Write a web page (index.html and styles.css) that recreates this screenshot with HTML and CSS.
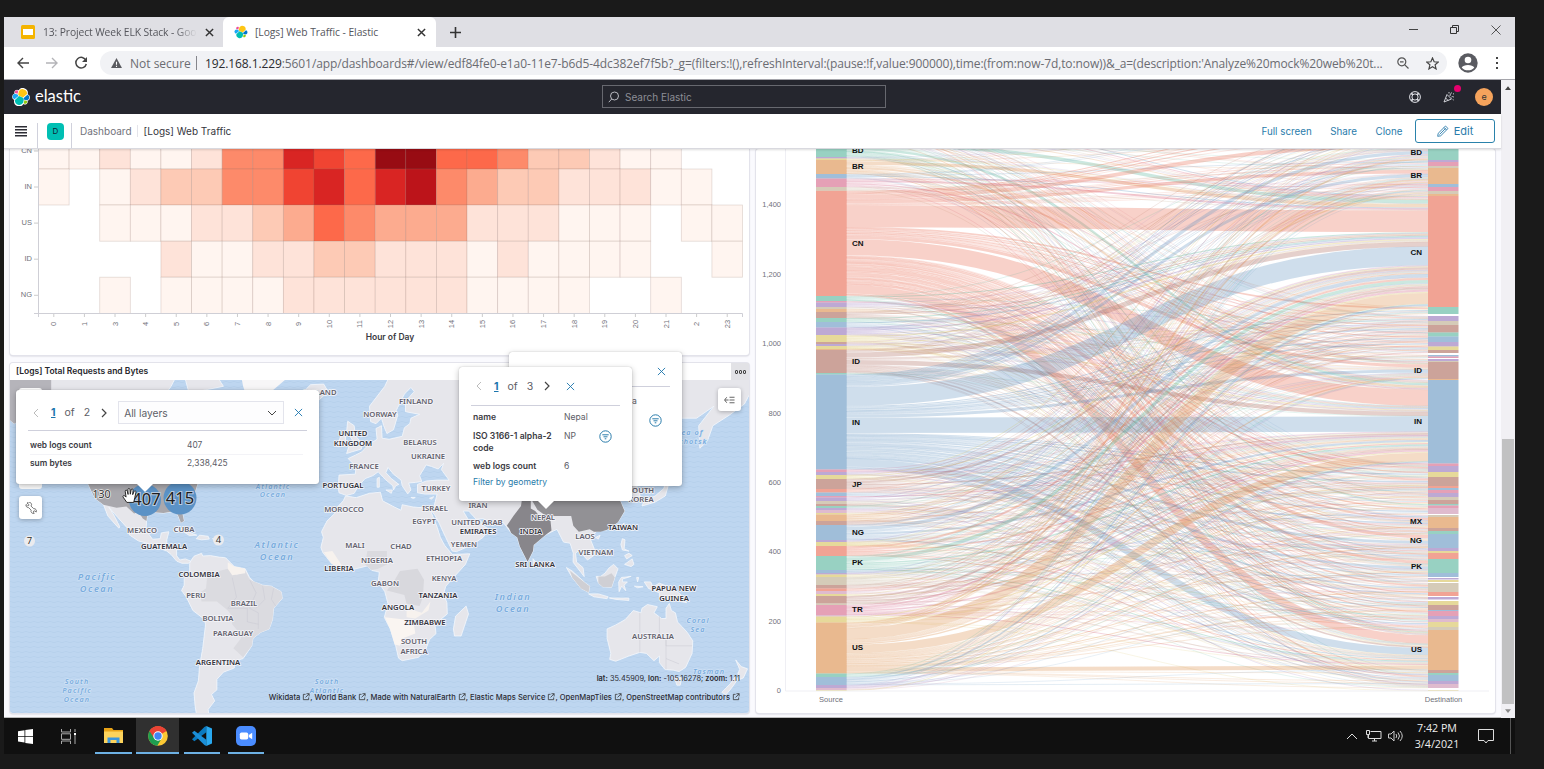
FILE: index.html
```html
<!DOCTYPE html>
<html lang="en">
<head>
<meta charset="utf-8">
<title>[Logs] Web Traffic - Elastic</title>
<link rel="stylesheet" href="styles.css">
</head>
<body>
<svg width="0" height="0" class="defs" aria-hidden="true">
  <symbol id="elastic" viewBox="0 0 32 32">
    <path fill="#fff" d="M32 16.8a6.3 6.3 0 0 0-4.1-5.9A8.9 8.9 0 0 0 11.8 4a4.8 4.8 0 0 0-7.3 5.6A6.4 6.4 0 0 0 4 21.5 8.9 8.9 0 0 0 20.200 28.400a4.800 4.800 0 0 0 7.300-5.700A6.300 6.300 0 0 0 32 16.800"/>
    <path fill="#fec514" d="m12.600 13.800 7 3.200 7.100-6.200A7.900 7.900 0 0 0 12.200 5.700l-1.200 6.100z"/>
    <path fill="#00bfb3" d="M5.300 21.200a7.900 7.900 0 0 0 14.500 5.200L21 20.300l-1.600-3-7-3.200z"/>
    <path fill="#f04e98" d="m5.200 9 4.800 1.200 1.100-5.500A3.800 3.800 0 0 0 5.200 9"/>
    <path fill="#1ba9f5" d="M4.800 10.200a5.300 5.300 0 0 0-.2 10L11.400 14l-1.300-2.600z"/>
    <path fill="#93c90e" d="M20.900 27.300a3.800 3.800 0 0 0 5.900-4.300l-4.800-1.100z"/>
    <path fill="#07c" d="m21.800 20.700 5.300 1.200a5.300 5.300 0 0 0 .3-10l-7 6.100z"/>
  </symbol>
  <symbol id="x" viewBox="0 0 10 10"><path d="M1 1l8 8M9 1l-8 8" fill="none" stroke="currentColor"/></symbol>
  <symbol id="filter" viewBox="0 0 13 13"><circle cx="6.500" cy="6.500" r="5.700" fill="none" stroke="currentColor"/><path d="M3.300 4.800h6.400M4.500 6.800h4M5.700 8.800h1.600" stroke="currentColor" fill="none"/></symbol>
  <symbol id="ext" viewBox="0 0 9 9"><path d="M4 1.500H1.500v6h6V5M5 .800h3v3M8 .800 4 5" fill="none" stroke="currentColor" stroke-width=".900"/></symbol>
</svg>
<div class="screen">
  <div class="tabs">
    <div class="tab">
      <svg class="fav" viewBox="0 0 14 14"><rect width="14" height="14" rx="1.500" fill="#f4b400"/><rect x="2" y="4" width="10" height="6" fill="#fff"/></svg>
      <span class="title t1">13: Project Week ELK Stack - Goo</span><svg class="close"><use href="#x"/></svg>
    </div>
    <div class="tab active">
      <svg class="fav"><use href="#elastic"/></svg>
      <span class="title t2">[Logs] Web Traffic - Elastic</span><svg class="close"><use href="#x"/></svg>
    </div>
    <svg class="plus" viewBox="0 0 11 11"><path d="M5.500 0v11M0 5.500h11" stroke="#333" stroke-width="1.600"/></svg>
    <div class="winbtns">
      <svg viewBox="0 0 10 10"><path d="M0 4.500h9" stroke="#444"/></svg>
      <svg viewBox="0 0 10 10"><path d="M.500 2.500h6v6h-6zM2.500 2.500v-2h6v6h-2" fill="none" stroke="#333"/></svg>
      <svg viewBox="0 0 10 10"><path d="M.500.500l9 9M9.500.500l-9 9" fill="none" stroke="#444" stroke-width=".900"/></svg>
    </div>
  </div>
  <div class="toolbar">
    <svg class="nav" viewBox="0 0 14 14"><path d="M13 7H2M7 2 2 7l5 5" fill="none" stroke="#444" stroke-width="1.400"/></svg>
    <svg class="nav" viewBox="0 0 14 14"><path d="M1 7h11M7 2l5 5-5 5" fill="none" stroke="#b4b4b8" stroke-width="1.400"/></svg>
    <svg class="nav" viewBox="0 0 14 14"><path d="M12 4.500A5.300 5.300 0 1 0 12.300 8" fill="none" stroke="#444" stroke-width="1.500"/><path d="M13 1v5H8z" fill="#444"/></svg>
    <div class="omni">
      <svg class="warn" viewBox="0 0 12 11"><path d="M6 0l6 11H0z" fill="#5a5b60"/><path d="M6 4v3.500M6 8.500v1.300" stroke="#fff" stroke-width="1.200"/></svg>
      <span class="ns">Not secure</span><i></i>
      <span class="url"><b>192.168.1.229</b>:5601/app/dashboards#/view/edf84fe0-e1a0-11e7-b6d5-4dc382ef7f5b?_g=(filters:!(),refreshInterval:(pause:!f,value:900000),time:(from:now-7d,to:now))&amp;_a=(description:'Analyze%20mock%20web%20t...</span>
      <svg class="mag" viewBox="0 0 12 12"><circle cx="4.800" cy="4.800" r="4" fill="none" stroke="#555" stroke-width="1.200"/><path d="M7.800 7.800l3.700 3.700M3 4.800h3.600" stroke="#555" stroke-width="1.200"/></svg>
      <svg class="star" viewBox="0 0 12 12"><path d="M6 .900l1.500 3.500 3.800.300-2.900 2.500.900 3.800L6 9l-3.300 2 .900-3.800L.700 4.700l3.800-.300z" fill="none" stroke="#444" stroke-width="1.100"/></svg>
    </div>
    <svg class="user" viewBox="0 0 20 20"><circle cx="10" cy="10" r="9.700" fill="#5a5b61"/><circle cx="10" cy="7" r="3.300" fill="#fff"/><path d="M3.700 14.500c1.500-3.500 11-3.500 12.600 0-3 3.800-9.600 3.800-12.600 0" fill="#fff"/></svg>
    <svg class="dots" viewBox="0 0 4 14"><path d="M1 1h2v2H1zM1 6h2v2H1zM1 11h2v2H1z" fill="#444"/></svg>
  </div>
  <div class="viewport">
    <div class="page">
      <header class="top">
        <svg class="logo"><use href="#elastic"/></svg><span class="brand">elastic</span>
        <div class="search"><svg viewBox="0 0 12 12"><circle cx="6.500" cy="5" r="4" fill="none" stroke="#b8b9c0"/><path d="M3.700 8 .800 11.200" stroke="#b8b9c0"/></svg><span>Search Elastic</span></div>
        <div class="acts">
          <svg class="help" viewBox="0 0 12 12"><circle cx="6" cy="6" r="5.400" fill="none" stroke="#dfe0e6"/><circle cx="6" cy="6" r="3.100" fill="none" stroke="#dfe0e6"/><path d="M2.200 2.200l1.700 1.700M9.800 2.200 8.100 3.900M2.200 9.800l1.700-1.700M9.800 9.800 8.100 8.100" stroke="#dfe0e6" stroke-width="1.800"/></svg>
          <span class="party"><svg viewBox="0 0 12 12"><path d="M1 11 4 3.500 8.500 8zM2.700 7l2.500 2.600M6 2.500V1M7 5c0-2 1-2 1.500-3.500M8.500 6C10 5 10 6 11 6M10 3.200l1-.700M9.700 8.500l1 .500" fill="none" stroke="#dfe0e6" stroke-width=".900"/></svg><em></em></span>
          <span class="avatar">e</span>
        </div>
      </header>
      <nav class="crumbs">
        <svg class="burger" viewBox="0 0 12 11"><path d="M0 .750h12M0 3.750h12M0 6.750h12M0 9.750h12" stroke="#2c2c34" stroke-width="1.500"/></svg>
        <i></i><span class="space">D</span><i></i>
        <span class="c1">Dashboard</span><u></u><span class="c2">[Logs] Web Traffic</span>
        <div class="links"><a>Full screen</a><a>Share</a><a>Clone</a>
          <button><svg viewBox="0 0 12 12"><path d="M1.200 8.300 8.500 1l2.500 2.500L3.700 10.800.700 11.300zM7 2.500 9.500 5M2.500 9.500 8.700 3.300" fill="none" stroke="#2a7cab" stroke-width=".900"/></svg>Edit</button></div>
      </nav>
      <main>
        <div class="col">
          <section class="panel heat"><svg id="heat" viewBox="10 149 739 206"></svg></section>
          <section class="panel mapp">
            <h2>[Logs] Total Requests and Bytes</h2><span class="opts"><b></b><b></b><b></b></span>
            <svg id="map" viewBox="10 380 739 333"></svg>
            <div class="tool wrench"><svg viewBox="0 0 14 14"><path d="M2.300 1.300A2.900 2.900 0 0 1 7 4.800l3.200 3a2.700 2.700 0 0 1 2.800 4l-1.500-1.500-1.400.300-.300 1.400 1 1.200a2.800 2.800 0 0 1-3.600-3.700L4.300 6.600A2.900 2.900 0 0 1 1.200 2.900l1.700 1.600 1.400-.400.200-1.300z" fill="none" stroke="#555" stroke-width=".900"/></svg></div>
            <div class="tool layers"><svg viewBox="0 0 12 10"><path d="M3 2 .600 5 3 8M1 5h4M6 2h5.500M6 5h5.500M6 8h5.500" fill="none" stroke="#444" stroke-width=".900"/></svg></div>
            <div class="pop back"><svg class="px"><use href="#x"/></svg><hr><span class="frag">a</span><svg class="filt"><use href="#filter"/></svg></div>
            <div class="pop front">
              <div class="pager"><svg viewBox="0 0 6 10"><path d="M5 1 1 5l4 4" fill="none" stroke="#bbb"/></svg><b>1</b><span>of</span><span>3</span><svg viewBox="0 0 6 10"><path d="M1 1l4 4-4 4" fill="none" stroke="#444" stroke-width="1.200"/></svg><svg class="px"><use href="#x"/></svg></div>
              <div class="rows">
                <div><b>name</b><span>Nepal</span></div>
                <div class="two"><b>ISO 3166-1 alpha-2 code</b><span>NP</span><svg class="filt"><use href="#filter"/></svg></div>
                <div class="cnt"><b>web logs count</b><span>6</span></div>
                <a>Filter by geometry</a>
              </div>
            </div>
            <div class="pop left">
              <div class="pager"><svg viewBox="0 0 6 10"><path d="M5 1 1 5l4 4" fill="none" stroke="#bbb"/></svg><b>1</b><span>of</span><span>2</span><svg viewBox="0 0 6 10"><path d="M1 1l4 4-4 4" fill="none" stroke="#444" stroke-width="1.200"/></svg>
                <div class="sel">All layers<svg viewBox="0 0 10 6"><path d="M1 1l4 4 4-4" fill="none" stroke="#444"/></svg></div><svg class="px"><use href="#x"/></svg></div>
              <div class="rows"><div><b>web logs count</b><span>407</span></div><div><b>sum bytes</b><span>2,338,425</span></div></div>
            </div>
            <svg class="hand" viewBox="0 0 15 16"><path d="M4.500 14.500 1 9.500c-.600-1.200.800-2 1.800-1l1 1L3 4c0-1.400 1.600-1.400 2 0l.700 3-.200-4.500c0-1.500 1.900-1.500 2 0l.300 4.300.700-4c.300-1.400 2-1.200 1.900.200L10 7.200l1.300-2.900c.600-1.200 2-.700 1.800.600L12 10l-1 4.500z" fill="#fff" stroke="#222" stroke-width=".900"/></svg>
            <div class="coords"><b>lat:</b> 35.45909, <b>lon:</b> -105.16278; <b>zoom:</b> 1.11</div>
            <div class="credit">Wikidata <svg><use href="#ext"/></svg>, World Bank <svg><use href="#ext"/></svg>, Made with NaturalEarth <svg><use href="#ext"/></svg>, Elastic Maps Service <svg><use href="#ext"/></svg>, OpenMapTiles <svg><use href="#ext"/></svg>, OpenStreetMap contributors <svg><use href="#ext"/></svg></div>
          </section>
        </div>
        <section class="panel sank"><svg id="sankey" viewBox="756 149 739 564"></svg></section>
      </main>
    </div>
    <div class="scroll"><svg viewBox="0 0 8 5"><path d="M0 5 4 0l4 5z" fill="#444"/></svg><div></div><svg viewBox="0 0 8 5"><path d="M0 0l4 5 4-5z" fill="#888"/></svg></div>
  </div>
  <footer class="task">
    <div class="ti a1"><svg viewBox="0 0 15 15"><path d="M0 2.200l6.500-1V7H0zM7.300 1 15 0v7H7.300zM0 7.800h6.500v5.800l-6.500-1zM7.300 7.800H15V15l-7.700-1.100z" fill="#fff"/></svg></div>
    <div class="ti a2"><svg viewBox="0 0 15 15"><path d="M.500 0v3h9V0M.500 15v-3h9v3M.500 4.800h9v5.500h-9zM14 0v3M14 5v10" fill="none" stroke="#aaa"/><path d="M13 4h2v2h-2z" fill="#fff"/></svg></div>
    <div class="ti a3 run"><svg viewBox="0 0 20 16" class="wide"><path d="M0 0h8l1.500 2H19v13H0z" fill="#e8a317"/><path d="M0 3.500h19V15H0z" fill="#fcd35c"/><path d="M3.500 15V9.500h12V15h-3v-3h-6v3z" fill="#3a96dd"/></svg></div>
    <div class="ti a4 run on"><svg viewBox="0 0 20 20" class="wide big"><circle cx="10" cy="10" r="9.800" fill="#fcc934"/><path d="M1.500 5.100A9.800 9.800 0 0 1 18.500 5.100L10 10z" fill="#ea4335"/><path d="M1.500 5.100A9.800 9.800 0 0 0 9.300 19.800L13.900 12 10 10z" fill="#1e9e50"/><path d="M1.500 5.100A9.800 9.800 0 0 1 18.500 5.100H10L6 12z" fill="#ea4335"/><circle cx="10" cy="10" r="4.700" fill="#fff"/><circle cx="10" cy="10" r="3.700" fill="#4285f4"/></svg></div>
    <div class="ti a5 run"><svg viewBox="0 0 21 21" class="wide big"><path d="M15 0v6.500L2.500 16 0 14 13 1z" fill="#0a7ac0"/><path d="M15 21v-6.500L2.500 5 0 7l13 13z" fill="#1b8fd8"/><path d="M15 0l6 2.500v16L15 21z" fill="#29a9f0"/></svg></div>
    <div class="ti a6 run"><svg viewBox="0 0 20 20" class="wide big"><rect width="20" height="20" rx="5" fill="#4a8cff"/><rect x="3.800" y="6.500" width="8.400" height="7" rx="1.700" fill="#fff"/><path d="M12.800 9l3.400-2.300v6.600L12.800 11z" fill="#fff"/></svg></div>
    <div class="tray">
      <svg viewBox="0 0 12 8"><path d="M1 7l5-5 5 5" fill="none" stroke="#ddd"/></svg>
      <svg class="net" viewBox="0 0 16 12"><path d="M4.500 1.500H15v7H2.500V5M6 11h5M8.500 8.500V11M.500.500h3v4h-3zM2 4.500V8" fill="none" stroke="#ddd"/></svg>
      <svg class="vol" viewBox="0 0 15 12"><path d="M.500 4H3l3-3v10L3 8H.500zM8 4q1.500 2 0 4M10 2.500q3 3.500 0 7M12 1q4.500 5 0 10" fill="none" stroke="#ccc"/></svg>
      <div class="clock">7:42 PM<br>3/4/2021</div>
      <svg class="note" viewBox="0 0 16 15"><path d="M.500.500h15v11H10L8 14l-2-2.500H.500z" fill="none" stroke="#ddd"/></svg>
    </div>
  </footer>
</div>
<script src="charts.js"></script>
</body>
</html>
```

FILE: styles.css
```css
*{box-sizing:border-box}
body{margin:0;width:1544px;height:769px;overflow:hidden;background:#1a1a1a;font-family:Inter,"Liberation Sans",sans-serif;color:#45454d}
.defs{position:absolute}
svg{display:block;flex:none}
.screen{margin:17px 0 0 4px;width:1511px;height:737px;display:flex;flex-direction:column;background:#fff}
.tabs{height:30px;background:#dfdfe4;display:flex;align-items:center;font-family:"Open Sans","Noto Sans",sans-serif;font-size:10.300px;color:#55565c}
.tab{height:30px;width:219px;display:flex;align-items:center;padding-left:17px}
.tab.active{background:#fff;border-radius:6px 6px 0 0;width:213px;padding-left:11px}
.fav{width:14px;height:14px;margin-right:8px}
.active .fav{margin-right:7px}
.title{white-space:nowrap;overflow:hidden}
.t1{width:154px;letter-spacing:-.1px;-webkit-mask-image:linear-gradient(90deg,#000 86%,transparent)}
.t2{width:153px;letter-spacing:-.050px}
.close{width:9px;height:9px;margin-left:8px;color:#333;stroke-width:1.600}
.active .close{margin-left:9px}
.plus{width:11px;height:11px;margin-left:14px}
.winbtns{margin-left:auto;display:flex;gap:31px;padding-right:14px}
.winbtns svg{width:10px;height:10px;position:relative;top:-2px}
.toolbar{height:32px;display:flex;align-items:center;font-family:"Open Sans","Noto Sans",sans-serif;font-size:12px;padding-left:12px}
.nav{width:14px;height:14px;margin-right:15px}
.nav:nth-child(3){margin-right:12px}
.omni{width:1347px;height:24px;border-radius:12px;background:#f1f2f5;display:flex;align-items:center;padding-left:11px;color:#6b6c72;flex:none}
.warn{width:11px;height:10px;margin-right:8px}
.ns{width:60px;white-space:nowrap}
.omni i{width:1px;height:14px;background:#85868c;margin:0 8px 0 6px}
.url{white-space:nowrap;width:1192px;letter-spacing:-.100px}
.url b{font-weight:400;color:#2a2a2e}
.mag{width:12px;height:12px;margin-right:17px}
.star{width:13px;height:13px}
.user{width:20px;height:20px;margin-left:11px}
.dots{width:4px;height:14px;margin-left:17px}
.viewport{height:639px;display:flex;border-top:1px solid #a5a5ab}
.page{width:1497px;display:flex;flex-direction:column}
.top{height:34px;background:#25262e;display:flex;align-items:center;padding-left:8px;position:relative}
.logo{width:18px;height:18px}
.brand{font:16.500px/20px Lato,sans-serif;color:#fff;margin:-2px 0 0 5px}
.search{position:absolute;left:598px;top:5px;width:284px;height:23px;border:1px solid #67686f;display:flex;align-items:center;padding-left:5px;font-size:10px;color:#8d8e96;gap:5px}
.search svg{width:12px;height:12px}
.acts{margin-left:auto;display:flex;align-items:center;padding-right:8px}
.help{width:12px;height:12px;margin-right:22px}
.party{position:relative;margin-right:20px}
.party svg{width:12px;height:12px}
.party em{position:absolute;width:7px;height:7px;border-radius:50%;background:#e5006e;right:-6px;top:-6px}
.avatar{width:18px;height:18px;border-radius:50%;background:#f5a35c;color:#333;font-size:9px;text-align:center;line-height:17px}
.crumbs{height:35px;display:flex;align-items:center;padding-left:11px;font-size:10px;border-bottom:1px solid #d9d9df;background:#fff;box-shadow:0 1px 2px #0002;z-index:2}
.burger{width:12px;height:11px}
.crumbs i{width:1px;height:25px;background:#d0d1dc;margin:9px 9px 0 10px}
.space{width:17px;height:17px;border-radius:4px;background:#00bfb3;font-size:8px;text-align:center;line-height:17px;color:#123}
.space + i{margin:9px 8px 0 7px}
.c1{color:#71727a}
.crumbs u{width:1px;height:12px;background:#e4e4ea;margin:0 6px 0 5px}
.c2{color:#35353d}
.links{margin-left:auto;display:flex;align-items:center;gap:18.500px;color:#2a7cab;padding-right:6px}
.links a{font-size:9.800px}
.links button{width:80px;height:24px;margin-left:-6px;border:1px solid #2a82ab;border-radius:3px;background:#fff;color:#2a7cab;font:11px Inter,sans-serif;display:flex;align-items:center;justify-content:center;gap:5px;padding:0}
.links button svg{width:12px;height:12px}
main{height:569px;background:#fafafe;display:flex;gap:7px;padding:0 6px 5px;border-bottom:1px solid #bbb}
.col{width:739px;display:flex;flex-direction:column;gap:8px}
.panel{background:#fff;border-radius:3px;box-shadow:0 0 0 1px #e3e3eb,0 1px 2px #b9b9c4}
.heat{height:206px;border-radius:0 0 3px 3px}
.heat svg,.sank svg{width:739px;height:100%}
.sank{width:739px;height:564px}
.mapp{height:350px;position:relative}
.mapp h2{margin:0;height:17px;line-height:17px;font-size:8.500px;font-weight:600;color:#26262c;padding-left:6px}
#map{width:739px;height:333px;border-radius:0 0 3px 3px}
.opts{position:absolute;right:0;top:0;width:18px;height:17px;background:#e2e2e6;display:flex;gap:1px;align-items:center;justify-content:center}
.opts b{width:3px;height:4px;border:1px solid #444;border-radius:1px}
.tool{position:absolute;width:23px;height:23px;border-radius:3px;background:#fff;box-shadow:0 1px 4px #0004;display:grid;place-items:center}
.tool svg{width:12px;height:12px}
.tool.layers svg{width:11px}
.wrench{left:9px;top:133px}
.layers{left:708px;top:25px}
.pop{position:absolute;background:#fff;border-radius:3px;box-shadow:0 2px 6px #0004,0 0 1px #0005;font-size:8.600px;color:#5c5d66}
.pop.back{left:499px;top:-11px;width:173px;height:134px}
.back .px{position:absolute;left:148px;top:15px}
.back hr{position:absolute;left:11px;right:12px;top:34px;border:0;border-top:1px solid #cfd0dc;margin:0}
.frag{position:absolute;left:123px;top:44px}
.back .filt{position:absolute;left:140px;top:62px}
.px{width:9px;height:9px;color:#1b75ad}
.filt{width:13px;height:13px;color:#2a7cab}
.pop.front{left:449px;top:4px;width:173px;height:134px;padding:0 12px}
.front:after,.left:after{content:"";position:absolute;left:79px;bottom:-8px;border:8px solid transparent;border-top-color:#fff;border-bottom:0}
.pager{display:flex;align-items:center;font-size:10.500px;height:39px;border-bottom:1px solid #cfd0dc;padding-left:5px}
.pager > svg{width:6px;height:10px}
.pager b{color:#1b75ad;text-decoration:underline;margin:0 9px 0 12px}
.pager span{margin-right:9px}
.pager span + span{margin-right:11px}
.pager > .px{width:9px;height:9px;margin-left:16px}
.rows{padding:0 4px 0 3px;color:#5c5d66}
.rows b{font-weight:600;color:#3a3a42;display:inline-block}
.front .rows > div{display:flex;height:19px;align-items:center}
.front .rows b{width:91px;margin-right:0;white-space:normal}
.front .rows{padding:1px 2px}
.front .rows > div.two{height:31px;align-items:flex-start;line-height:12px;padding-top:4px}
.two b{padding-right:8px}
.two span{width:35px}
.front .rows > .cnt{height:17px}
.rows a{display:block;color:#2a7cab;line-height:17px}
.pop.left{left:6px;top:27px;width:303px;height:94px;padding:0 12px}
.left:after{left:121px}
.left .pager{height:41px;padding-top:5px}
.sel{width:166px;height:23px;border:1px solid #e3e4ec;background:#fdfdfe;display:flex;align-items:center;justify-content:space-between;padding:0 6px 0 5px;margin-left:11px;font-size:10.200px}
.sel svg{width:10px;height:6px}
.left .pager > .px{margin-left:10px}
.left .rows{padding:5px 4px 0 2px;font-size:8.400px}
.left .rows > div{height:18px;display:flex;align-items:center}
.left .rows > div + div{border-top:1px solid #f3f3f7;height:17px}
.left .rows b{width:157px}
.hand{position:absolute;left:112px;top:124px;width:16px;height:17px}
.coords,.credit{position:absolute;color:#2c2c34;white-space:nowrap}
.coords{right:9px;top:311px;font-size:7.400px}
.coords b{font-weight:600}
.credit{right:9px;top:330px;font-size:7.600px;font-weight:500}
.credit svg{width:8px;height:8px;display:inline-block;vertical-align:-1px;color:#333}
.scroll{width:14px;background:#f1f0f4;display:flex;flex-direction:column;align-items:center;padding:6px 0 5px}
.scroll svg{width:6px;height:4px}
.scroll div{width:12px;height:265px;background:#c1c1c2;margin:349px 0 5px}
.task{height:36px;background:#101010;display:flex;position:relative;color:#eee}
.ti{height:36px;display:grid;place-items:center;position:relative}
.ti svg{width:15px;height:15px}
.ti svg.wide{width:20px;height:16px}
.ti svg.big{width:20px;height:20px}
.a1{width:42px}
.a2{width:45px}
.a3{width:45px}
.a4{width:43px;margin-right:1px}
.a5{width:44px}
.a6{width:44px}
.run:after{content:"";position:absolute;left:4px;right:4px;bottom:0;height:2px;background:#6db1e4}
.on{background:#303030}
.on:after{left:0;right:0}
.tray{margin-left:auto;display:flex;align-items:center;padding-right:21px}
.tray svg{width:12px;height:8px;margin-right:8px}
.tray .net{width:16px;height:12px;margin-right:6px}
.tray .vol{width:15px;height:12px;margin-right:10px}
.tray .note{width:16px;height:15px;margin:0}
.clock{width:48px;text-align:center;font:10.700px/16px "Open Sans",sans-serif;margin-right:17px}
.task:after{content:"";position:absolute;right:4px;top:0;width:1px;height:36px;background:#555}
.ax{font-size:7.500px;fill:#71727a;font-family:"Liberation Sans",sans-serif}
.axt{font-size:8.500px;font-weight:600;fill:#3a3a42}
.nd{font:700 8px "Liberation Sans",sans-serif;fill:#111}
.ml{font:600 7.700px "Noto Sans",sans-serif;fill:#62616c;stroke:#f6f6fa;stroke-width:1.600px;paint-order:stroke;text-anchor:middle;stroke-linejoin:round}
.ml.dk{fill:#33333c}
.ol{font:italic 600 9.200px "Noto Sans",sans-serif;fill:#78abdd;stroke:#d4e5f7;stroke-width:1.200px;paint-order:stroke;text-anchor:middle;letter-spacing:1.500px}
.ol.sm{font-size:7.200px;letter-spacing:1.100px}
.cl{font:16.500px "Noto Sans",sans-serif;fill:#1d1d20;stroke:#b9cbe0;stroke-width:2px;paint-order:stroke;text-anchor:middle}
.cs{font:9.500px "Noto Sans",sans-serif;fill:#333;stroke:#eee;stroke-width:1.500px;paint-order:stroke;text-anchor:middle}
```

FILE: charts.js
```js
const NS = 'http://www.w3.org/2000/svg';
function add(parent, tag, attrs, text) {
  const e = document.createElementNS(NS, tag);
  for (const k in attrs) e.setAttribute(k, attrs[k]);
  if (text !== undefined) e.textContent = text;
  parent.appendChild(e);
  return e;
}
let seed = 11;
function rnd() { seed = (seed * 16807) % 2147483647; return seed / 2147483647; }

/* ---- Heatmap: unique visitors by country and hour ---- */
(function () {
  const g = document.getElementById('heat');
  const col = ['', '#fff5f0', '#fee3d9', '#fdcab5', '#fcab8f', '#fd8a6a', '#fd694a', '#f04432', '#d92523', '#bc141a', '#980c13'];
  const rows = [
    ['CN', 133, 36, [1,1,2,1,1,2,5,5,8,7,6,10,10,6,6,5,3,3,2,1,1,0,0]],
    ['IN', 169, 36, [1,0,1,2,3,3,5,5,7,8,6,8,9,5,4,3,3,2,2,2,1,1,0]],
    ['US', 205, 36.2, [0,0,1,1,1,2,2,3,4,6,5,4,4,4,2,2,2,1,1,1,0,1,1]],
    ['ID', 241.2, 36, [0,0,0,0,2,1,1,2,2,3,3,2,2,2,1,2,1,1,1,1,0,0,1]],
    ['NG', 277.2, 36.2, [0,0,1,0,1,1,1,1,2,2,2,2,2,2,1,1,1,1,0,0,1,0,0]]
  ];
  const x0 = 38.5, w = 30.61;
  rows.forEach(r => {
    r[3].forEach((v, i) => {
      if (v) add(g, 'rect', { x: x0 + i * w, y: r[1], width: w, height: r[2], fill: col[v], stroke: '#8c6a62', 'stroke-opacity': .24, 'stroke-width': .8 });
    });
    const cy = r[1] + r[2] / 2;
    add(g, 'text', { x: 32, y: cy + 2.1, class: 'ax', 'text-anchor': 'end' }, r[0]);
    add(g, 'path', { d: `M34 ${cy}h4`, stroke: '#ccc' });
  });
  add(g, 'path', { d: 'M38.5 149V317M34 313.5H742.5V317', fill: 'none', stroke: '#cfcfd6' });
  ['0','1','3','4','5','6','7','8','9','10','11','12','13','14','15','16','17','18','19','20','21','2','23'].forEach((t, i) => {
    const x = x0 + (i + .5) * w;
    add(g, 'path', { d: `M${x} 314v3`, stroke: '#ccc' });
    add(g, 'text', { transform: `translate(${x + 2.5} 324) rotate(-90)`, class: 'ax', 'text-anchor': 'middle' }, t);
  });
  add(g, 'text', { x: 390, y: 340, class: 'axt', 'text-anchor': 'middle' }, 'Hour of Day');
})();

/* ---- Sankey: source and destination countries ---- */
(function () {
  const g = document.getElementById('sankey');
  const C = { t: '#54B399', b: '#6092C0', p: '#D36086', v: '#9170B8', l: '#CA8EAE', y: '#D6BF57', n: '#B9A888', o: '#DA8B45', w: '#AA6556', r: '#E7664C' };
  const parse = (s, y) => s.split(' ').map(k => {
    const end = parseFloat(k.slice(1)), o = { c: k[0], y0: y, y1: end };
    y = end;
    return o;
  });
  const L = parse('b124 p127 r131 n134 v137 o141 t157 v158.5 y160 o174 b178.5 p187 n190.8 r296 t301 p302.5 v307 n309 o312 w318 t322 b327.5 v335 y342 w344 v346 y349 o350 w373 t374.5 b469.5 p472 v475 y479 w489 r492.5 b496 p497.5 v501 n504 w506 t508 v510 l513 y514.5 o521 w525 b540 v542 y546 r556 t570 b573 v574.5 y577 n585 w588.5 r591 l594 y596 w603.5 n605 p615 l616.5 y622.5 o673.5 t677 b685 v688 l690 y691', 120);
  const R = parse('b125 p128 r133 n136 v138 o142 t160 v162 p166 n168 o184 b187 p191 n194 o196 r307 t314 _316 v321 n325 w332.5 t336.5 b342 v346.5 y350 w353 _355 b356.5 p358 _359 v361 n362 w379 o380 b463.5 p466 v472 y477 w486 r488 b490 p493 v497 n500 w504 t505.5 p508 l514 _515 n517 o528 w531 t534 b548 v551 y553 r559 t573 b577 _578 v579.5 _580 y582 _583 n592 r596 _597 v599.5 _601 y605 w610 b611 p616 v619 l622 y627 n630 o670 w673 t675 b681 v684 l688 _690 y691', 120);
  const T = 571, U = .5;
  const cell = L.map(() => []);
  L.forEach((s, i) => {
    R.forEach((d, j) => {
      const q = d.c === '_' ? 0 : (s.y1 - s.y0) * (d.y1 - d.y0) / T / U;
      cell[i][j] = q > 5 ? q * (1.05 + rnd() * .2) : Math.floor(q * .95 + rnd());
    });
  });
  const links = [];
  const pos = R.map(d => d.y0);
  const colSum = R.map((d, j) => L.reduce((a, s, i) => a + cell[i][j], 0) || 1);
  L.forEach((s, i) => {
    const sum = cell[i].reduce((a, b) => a + b, 0) || 1;
    let y = s.y0;
    R.forEach((d, j) => {
      if (!cell[i][j]) return;
      const hl = (s.y1 - s.y0) * cell[i][j] / sum, hr = (d.y1 - d.y0) * cell[i][j] / colSum[j];
      links.push({ a: y + hl / 2, b: pos[j] + hr / 2, w: (hl + hr) / 2, c: C[s.c] });
      y += hl;
      pos[j] += hr;
    });
  });
  const lg = add(g, 'g', { fill: 'none' });
  links.forEach(k => {
    add(lg, 'path', { d: `M846 ${k.a}C1137 ${k.a} 1137 ${k.b} 1428 ${k.b}`, stroke: k.c, 'stroke-width': Math.max(k.w, .35), 'stroke-opacity': .3 });
  });
  [[L, 816], [R, 1428]].forEach(([list, x]) => list.forEach(n => {
    if (n.c !== '_') add(g, 'rect', { x, y: n.y0, width: 30.5, height: n.y1 - n.y0, fill: C[n.c], 'fill-opacity': .6 });
  }));
  [['BD',153],['BR',168.5],['CN',246],['ID',363.5],['IN',424.5],['JP',486.5],['NG',535],['PK',565],['TR',612],['US',650]].forEach(a => add(g, 'text', { x: 852, y: a[1], class: 'nd' }, a[0]));
  [['BD',154.5],['BR',177.5],['CN',254.5],['ID',372.5],['IN',423.5],['MX',524],['NG',542.5],['PK',568.5],['US',652]].forEach(a => add(g, 'text', { x: 1422, y: a[1], class: 'nd', 'text-anchor': 'end' }, a[0]));
  ['0','200','400','600','800','1,000','1,200','1,400'].forEach((t, i) => add(g, 'text', { x: 781, y: 693.3 - i * 69.45, class: 'ax', 'text-anchor': 'end' }, t));
  add(g, 'path', { d: 'M785.5 149V691H1489', fill: 'none', stroke: '#efeff4' });
  add(g, 'text', { x: 831, y: 702, class: 'ax', 'text-anchor': 'middle' }, 'Source');
  add(g, 'text', { x: 1443.5, y: 702, class: 'ax', 'text-anchor': 'middle' }, 'Destination');
})();

/* ---- World map, Mercator ---- */
(function () {
  const g = document.getElementById('map');
  const P = (lon, lat) => [358.6 + 2.18 * lon, 579.7 - 124.9 * Math.log(Math.tan(Math.PI / 4 + lat * Math.PI / 360))];
  const path = a => {
    let d = '';
    for (let i = 0; i < a.length; i += 2) d += (i ? 'L' : 'M') + P(a[i], a[i + 1]).map(v => v.toFixed(1)).join(' ');
    return d + 'Z';
  };
  const defs = add(g, 'defs', {});
  const pt = add(defs, 'pattern', { id: 'wave', width: 8, height: 5, patternUnits: 'userSpaceOnUse' });
  add(pt, 'path', { d: 'M0 2q2-1.5 4 0t4 0', fill: 'none', stroke: '#b2cdea', 'stroke-width': .6 });
  add(g, 'rect', { x: 10, y: 380, width: 739, height: 333, fill: '#bed6f0' });
  add(g, 'rect', { x: 10, y: 380, width: 739, height: 333, fill: 'url(#wave)' });
  const land = [
    [-168,66,-161,64,-165,61,-158,58,-152,60,-140,60,-131,55,-124,48,-124,40,-121,35,-117,32.5,-115,28,-110,23,-109.5,23.5,-112,28,-114.5,31.5,-112,29,-109,26,-106,23,-105,20,-101,17.5,-95,16,-92,14.5,-88,13,-86,11.5,-83.5,8.5,-81,7.5,-78,7.5,-77,8.5,-79.5,9.5,-82,9,-83.5,11,-83.5,15,-88,15.8,-88,18,-87,21.5,-90.5,21,-91,18.5,-94.5,18.2,-97.5,22,-97.3,26,-97,28,-94,29.5,-89.5,29.2,-84,30,-82.7,28,-81.5,25.3,-80.1,26,-81.3,31,-77,34.5,-75.5,36,-74,40,-70,41.5,-70,43.5,-66,44,-61,46,-64,49,-58,51,-56,53,-62,58,-70,61,-77,62,-78,58,-79,52,-82,53,-82,55,-94,58,-94,61,-86,66,-82,69,-80,75,-168,75],
    [-78,65,-74,65,-62,66,-67,69,-72,72,-80,73,-80,68],
    [-24,65.5,-22,64,-18,63.4,-14,65,-16,66.4,-22,66.3],
    [-85,22,-82,23.2,-77,21,-74.2,20,-77.7,19.9,-82,22.5], [-74.5,18.5,-73,20,-69,19.5,-68.5,18.3,-72,18], [-67,18.5,-65.5,18.4,-66,17.8],
    [-77.5,7.5,-77,8.5,-75.5,10.7,-72,12,-71.5,10.8,-68,11,-64,10.3,-61,10,-57,6,-52,5,-50,1,-48,-1,-44,-2.5,-40,-3,-35.5,-5.5,-35,-8.5,-39,-13,-39.5,-18,-41,-22,-45,-23.5,-48.5,-26,-49,-29,-53,-34,-57,-35,-57,-37.5,-62,-39,-65,-41.5,-65,-45,-67.5,-46.5,-66,-48.5,-69,-51,-68.5,-54,-74,-54,-75,-50,-75.5,-46,-73.5,-42,-73,-37,-71.5,-30,-70.2,-20,-71,-17.7,-76,-14,-79,-8,-81.2,-5,-80,-2.5,-80,0.5,-77.5,4],
    [-6,35.8,-1,35.2,5,36.8,10,37.2,11,34,15.5,32,19.5,30.3,20,32.5,25,31.6,30,31.3,32.5,31.2,34,28,36,23.5,37.5,19,39.5,15.5,43,11.5,51,11.8,49,7,44,1.5,40,-3,39,-6.5,40.5,-10.5,40.7,-15.5,35,-20,35.5,-24,32.5,-26.5,31,-30,27.5,-33.5,20,-34.8,18.3,-33.8,17,-29,14.5,-22,11.8,-17,13.5,-11,12,-5.5,9,-1,9.5,3.5,6,4.3,4,6.3,-2,4.8,-7.5,4.4,-12.5,7.5,-16.5,12.5,-17.3,14.7,-16.2,19,-17,21.5,-14.5,26,-11,29,-9.8,31.5,-7,34],
    [49.3,-12,50.4,-15.5,47,-25,44,-25,43.5,-22,44.5,-16.5],
    [-9.3,38.7,-9,37,-5.5,36,-2,36.8,0,39.5,3,42,6.5,43,9,44.3,12.3,41.7,15.7,39.5,16,38,17,39.5,18.5,40,15,42,12.5,44,13.5,45.7,16,43.5,19.5,41.5,20,39.5,22.5,36.6,24,38,23,40.5,26,40.7,29,41,28,43,31,46.5,33.5,46,36.5,45.2,39,47,38,45,41.5,41.5,36,41.5,31,41.2,27,40,27,37,30.5,36.5,36,36.5,34.5,31.5,32.5,31,34.9,28.5,37,25,39,21,43,13,45,12.8,52,15.8,57,19,59.8,22.5,56.5,24.5,56.2,26,51.5,24.5,50,27,48,30,50.5,30,54,26.7,57,27,61.5,25,66.5,25.2,70,21,72.8,19,74,15,77.5,8.2,80,13,80.3,15.7,86,20.3,91,22.5,94,17,97,16.5,98.5,12,98.4,8,103.5,1.4,103,5.5,100,8,99.5,12,101,13.3,105,9,109,11.8,106,19,109,21.5,114,22.3,119,25.5,122,30,119.5,35,122.3,37,118,39,121.5,40,124.5,39.7,126.3,34.5,129.3,35.5,127.5,39.7,132,43.3,138,48,141,53,137,54.5,143,59.3,155,59.3,163,62,156,57.5,156.5,51.5,160,53.5,162.5,57.5,170,60,177,62.5,180,65,190,66,180,69,180,80,20,80,15,68.5,12,66,5,62,5.5,58.5,8,58,10.5,59.3,11.5,57.5,13,55.5,16,56.5,18,60,17.2,61,21,64.5,24,65.8,25.5,65,21.5,63,21.5,60.8,28,60.2,24,59.3,23.5,58,21,57,20,54.8,14,54,10.8,54.3,10.5,57.5,8,56.8,8.5,54,4.5,52.5,1.5,50.5,-1.5,49.5,-4.8,48.5,-1.2,46,-1.5,43.5,-9,43.2],
    [-5.5,50,1.3,51.3,1.5,52.8,-1.5,55,-2,57.5,-5,58.6,-5.5,56,-3,54,-4.5,52], [-10,52,-6,52.2,-6,55,-8,55.2],
    [8.5,39,9.5,39,9.5,42.5,8.5,42], [12.5,38,15.5,38,15,36.8], [24,35.3,26,35.2,25,34.9], [32.5,35,34.5,35.6,33.5,34.6],
    [130,32,131,34,136,35.8,140,38.5,141,41.5,142,39.5,140.7,35.8,136,33.5], [140,42,145,43.5,142,45.5], [142,46,144,49,143,54,142,52],
    [120,23,121.8,25.2,121,22], [108.7,19,110.8,20,110,18.3], [120.3,16,121,18.5,122.2,18,121.8,14,124,13,121,13.5], [122,11,124,12,125.5,11,123,9.5], [122,7,125.5,9.5,126.3,7,125,6],
    [95.3,5.6,98,4,104,-1.5,106,-3,105.5,-5.8,102,-4,98,1], [105.5,-6.5,110,-6.5,114.5,-7.8,114,-8.7,108,-7.8], [115,-8.3,119,-8.4,124,-8.4,124,-9.5,118,-9],
    [109,1.5,111,1.5,113,3,115,5.5,117,7,119,5,117.5,1,116,-3.5,112,-3.3,110,-1.5],
    [119.5,-5.5,119.3,-1,120.5,1,125,1.5,121,.3,121,-1,123.3,-1,121.8,-2.5,122.5,-5,120.7,-3], [127.5,1,128.5,1,128,-1], [126.5,-3,130.5,-3.2,128,-3.7],
    [131,-1,134,-1,135,-3.3,138,-1.6,144,-4,147.5,-6.5,150.5,-10.5,147,-9.8,143,-9.2,138,-8.3,138,-6,133,-4],
    [114,-22,114,-26,115.7,-32,115.2,-34.3,118,-35,124,-33,129,-31.6,132,-32,135.5,-34.8,138,-33,138,-35.5,140.5,-38,144.5,-38.3,147,-38.8,150,-37.3,153,-32,153.3,-27,150.8,-23.5,146.3,-19,145.3,-15,143.5,-14,142.5,-10.8,141,-13,141,-17.5,139,-17.5,135.5,-15,137,-12.3,132.5,-11.3,130,-13,129.5,-15,126,-14,122.3,-18,118,-20.3],
    [144.8,-40.8,148.2,-41,147.5,-43.5,146,-43.5], [173,-34.5,175.5,-37,178.4,-37.8,176.5,-41,175,-41.5,174,-39.5,174.8,-38], [172.8,-40.6,174,-41.5,171,-44.5,168.5,-46.6,166.6,-45.8,170.5,-43], [80,9.6,81.8,7.2,80.2,6]
  ];
  land.forEach(a => add(g, 'path', { d: path(a), fill: '#e6e6eb', stroke: '#f4f8fc', 'stroke-width': .8, 'stroke-linejoin': 'round' }));
  const shade = (a, f) => add(g, 'path', { d: path(a), fill: f });
  shade([-62,80,-55,70,-53,66,-50,62,-44,60,-40,65,-28,69,-22,72,-22,80], '#f7f6f7');
  shade([-170,75,-141,75,-141,60,-152,60,-158,58,-165,61,-170,62], '#b5b4ba');
  shade([-124,48,-124,40,-121,35,-117,32.5,-111,31.3,-106.5,31.8,-103,29,-101,29.7,-99,27,-97.3,26,-97,28,-94,29.5,-89.5,29.2,-84,30,-82.7,28,-81.5,25.3,-80.1,26,-81.3,31,-77,34.5,-75.5,36,-74,40,-74,48], '#a9a8ad');
  shade([-60,5,-56,2,-52,4,-50,0,-44,-2.5,-40,-3,-35.5,-5.5,-35,-8.5,-39,-13,-39.5,-18,-41,-22,-45,-23.5,-48.5,-26,-49,-29,-53,-33.5,-57.5,-30,-54,-26,-54.5,-24,-58,-20,-58,-16.5,-60,-14,-65,-10,-72,-10,-73,-6,-70,-4,-69.5,1,-64,2,-64,4], '#dbdbe0');
  shade([13,-5,16,-1,19,4,27,5,30,0,29.5,-8,28,-12,22,-11,21,-7], '#d8d8dd');
  shade([3,7,4,13,13,13,13,7,9,5,6,4.5], '#dadadf');
  shade([110,1.5,113,1.5,116,3,117.5,1,116,-3.5,112,-3.3,110,-1.5], '#cfcfd4');
  shade([97,4,104,-1.5,106,-3,105.5,-5.8,102,-4,98,1], '#cfcfd4');
  shade([12,-17,21,-18,25,-18,26,-24,20,-26,19,-29,16.5,-28.5,14.5,-22], '#faf5f1');
  shade([22,-13,29,-15,33,-10,32,-14,26,-17.5,22,-17], '#f7f2ee');
  shade([-60,8,-57,6,-52,5,-52,3,-58,2,-60,5], '#f7f2ee');
  shade([-16,12.5,-12,13,-8,7,-8,4.5,-12.5,7.5], '#f7f2ee');
  shade([79,35,82,30.5,86,28,92,28,97.5,28,98.5,24,101,21.5,106,22.5,108,21.5,111,21.5,114,22.3,119,25.5,122,30,119.5,35], '#929195');
  shade([68,24,71,28,74.5,32,75,35,79,34,79,31,81,30,83.5,27.5,88,26.5,88.5,22,86,20.3,80.3,15.7,80,13,77.5,8.2,74,15,72.8,19,70,21,69,23], '#88868b');
  shade([48,45,51,47,53,45,51,43,53.5,40,54,37,50,37.5,49.5,40.5], '#bed6f0');
  const bd = add(g, 'g', { fill: 'none', stroke: '#c9c9d2', 'stroke-width': .5 });
  [[129,-15,129,-31.6],[138,-16.5,138,-26,129,-26],[141,-26,141,-38],[138,-26,141,-26,141,-29,153,-29],[141,-34,147,-36],[-50,0,-47,-6,-50,-13,-46,-15,-46,-22],[-44,-3,-43,-9,-47,-13],[-39,-4,-40,-9,-38,-12],[-60,-13,-51,-13,-51,-19,-46,-20],[-58,1,-56,-8,-60,-13]].forEach(a => add(bd, 'path', { d: path(a).slice(0, -1) }));
  [[145, 500, 16], [180, 498, 16.5]].forEach(c => add(g, 'circle', { cx: c[0], cy: c[1], r: c[2], fill: '#5b92c6' }));
  [[29.5, 541], [218.5, 540]].forEach(c => add(g, 'circle', { cx: c[0], cy: c[1], r: 5.5, fill: '#ebebee' }));
  [['ICELAND',320,395],['FINLAND',416,404],['NORWAY',380,416.5],['UNITED',353,436,1],['KINGDOM',353,445.5,1],['BELARUS',420,445],['UKRAINE',428,459],['FRANCE',364,468.5],['PORTUGAL',343,488,1],['TURKEY',436,491],['MOROCCO',344,512],['ISRAEL',435,511],['IRAN',478,508],['EGYPT',424,524],['UNITED ARAB',477,524.5],['EMIRATES',478,534,1],['YEMEN',464,547],['CHAD',401,549],['MALI',355,547.5],['NIGERIA',377,562.5],['ETHIOPIA',444,561],['LIBERIA',339,571,1],['KENYA',444,580.5],['GABON',385,585.5],['TANZANIA',438,598,1],['ANGOLA',398,609.5,1],['ZIMBABWE',425,624.5,1],['SOUTH',414,644],['AFRICA',414,653.5],['NEPAL',543,519.5],['INDIA',531,533.5,1],['SRI LANKA',535,567,1],['LAOS',585,539],['VIETNAM',596,554.5],['TAIWAN',623,529.5,1],['SOUTH',641,493],['KOREA',641,502],['PAPUA NEW',674,591,1],['GUINEA',674,600.5,1],['AUSTRALIA',653,639],['MEXICO',142,533],['CUBA',184,532],['GUATEMALA',164,549,1],['COLOMBIA',199,577,1],['PERU',196,598],['BRAZIL',244,606],['BOLIVIA',218,621],['PARAGUAY',233,635.5],['ARGENTINA',218,665,1]].forEach(a => add(g, 'text', { x: a[1], y: a[2], class: 'ml' + (a[3] ? ' dk' : '') }, a[0]));
  [['Pacific',97,579.5],['Ocean',97,591.5],['Atlantic',277,548],['Ocean',277,560],['Indian',513,600],['Ocean',513,612],['Atlantic',273,488.5,1],['Ocean',273,497,1],['South',77,684,1],['Pacific',77,693,1],['Ocean',77,702,1],['South',327,684,1],['Atlantic',327,693,1],['Coral',698,623,1],['Sea',698,632,1],['Tasman',709,674,1],['Sea of',690,435,1],['Okhotsk',690,444,1]].forEach(a => add(g, 'text', { x: a[1], y: a[2], class: 'ol' + (a[3] ? ' sm' : '') }, a[0]));
  add(g, 'text', { x: 146.5, y: 504.5, class: 'cl' }, '407');
  add(g, 'text', { x: 180, y: 503.7, class: 'cl' }, '415');
  add(g, 'text', { x: 101.5, y: 497.7, class: 'cs', style: 'font-size:10.5px' }, '130');
  add(g, 'text', { x: 29.5, y: 544.3, class: 'cs' }, '7');
  add(g, 'text', { x: 218.5, y: 543.3, class: 'cs' }, '4');
  add(g, 'rect', { x: 19, y: 388, width: 23, height: 101, rx: 3, fill: '#fff' });
})();
```
